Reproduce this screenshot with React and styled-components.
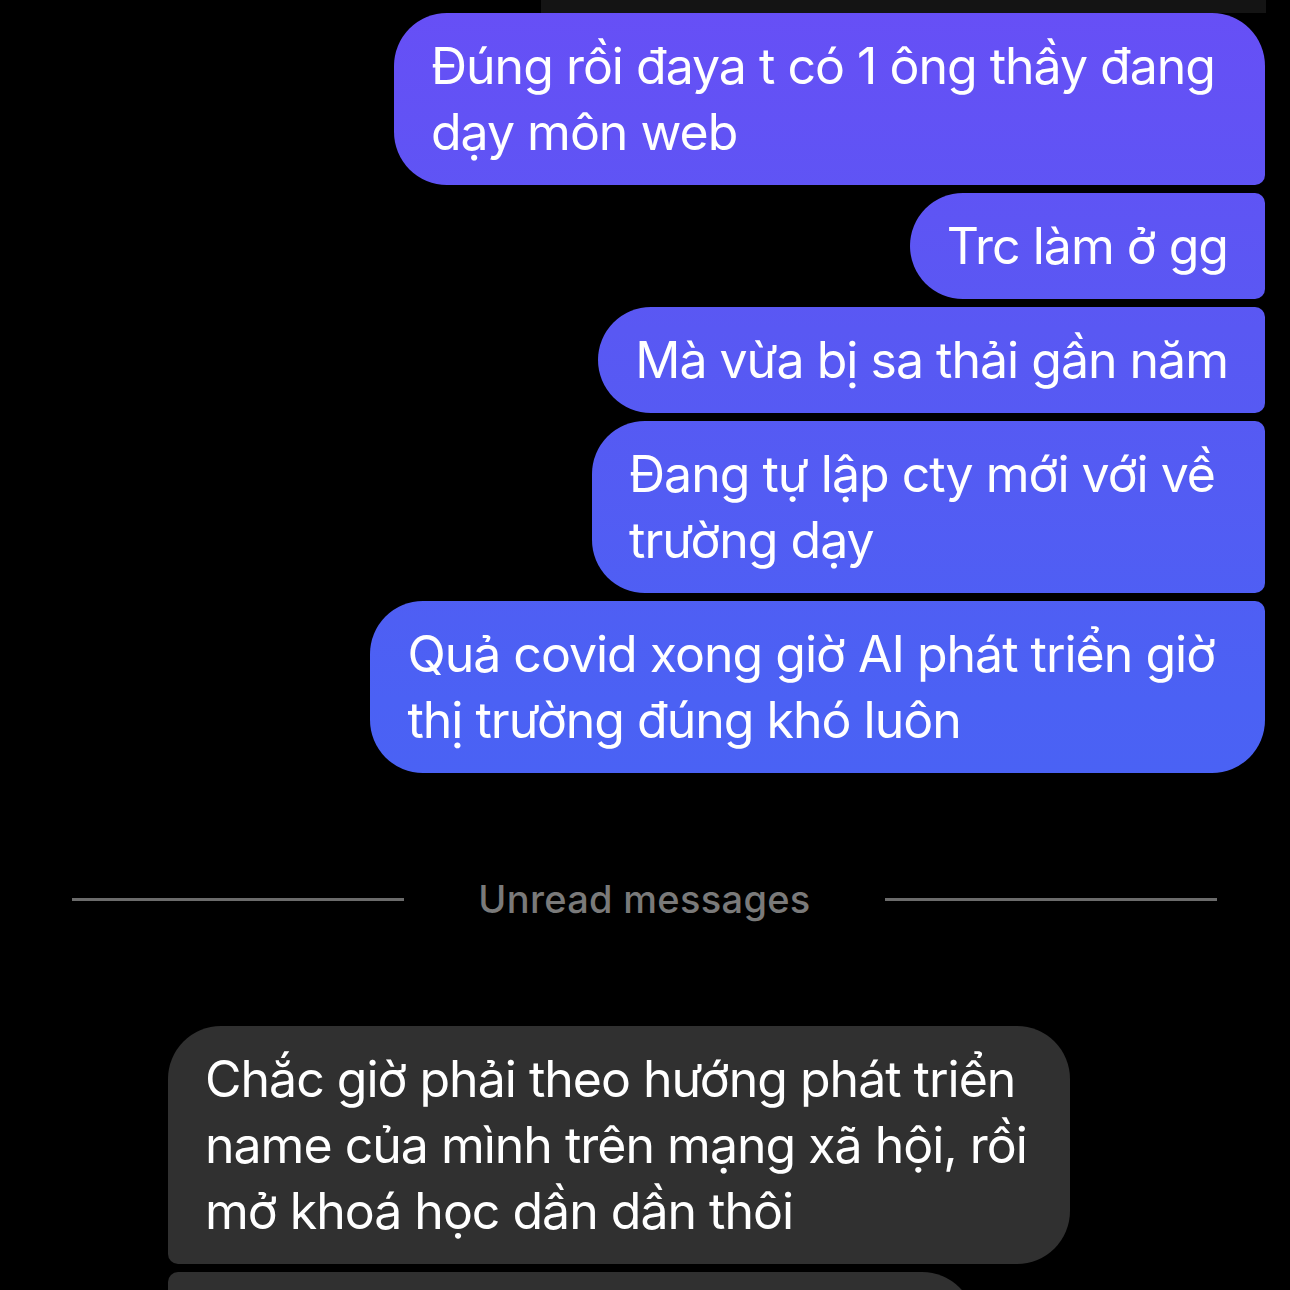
import React from "react";
import styled, { createGlobalStyle, css } from "styled-components";

const Global = createGlobalStyle`
  html, body {
    margin: 0;
    padding: 0;
    background: #000;
    overflow: hidden;
  }
  #root {
    width: 1290px;
    height: 1290px;
    overflow: hidden;
    background: #000;
  }
`;

const Screen = styled.div`
  width: 1290px;
  background: #000;
  display: flex;
  flex-direction: column;
  font-family: Inter, "Noto Sans", sans-serif;
  -webkit-font-smoothing: antialiased;
  & > * {
    flex-shrink: 0;
  }
`;

const PrevCard = styled.div`
  align-self: flex-end;
  width: 725px;
  height: 13px;
  margin-right: 24px;
  background: #141414;
`;

const Group = styled.div`
  display: flex;
  flex-direction: column;
  gap: 8px;
  align-items: ${(p) => (p.$mine ? "flex-end" : "flex-start")};
  padding: ${(p) => (p.$mine ? "0 25px 0 0" : "0 0 0 168px")};
`;

const BIG = 53;
const SMALL = 10;

const Bubble = styled.div`
  box-sizing: border-box;
  flex-shrink: 0;
  padding: 20px 37px;
  color: #fff;
  font-size: 50px;
  line-height: 66px;
  letter-spacing: -1px;
  white-space: nowrap;
  ${(p) =>
    p.$mine
      ? css`
          padding-right: ${p.$wrapped ? 50 : 37}px;
          background: linear-gradient(180deg, #674ff6 0px, #5958f3 330px, #4b61f4 700px, #4268f4 1290px);
          background-attachment: fixed;
          border-radius: ${BIG}px ${p.$pos === "first" ? BIG : SMALL}px
            ${p.$pos === "last" ? BIG : SMALL}px ${BIG}px;
        `
      : css`
          padding-right: ${p.$wrapped ? 43 : 37}px;
          background: #303030;
          border-radius: ${p.$pos === "first" ? BIG : SMALL}px ${BIG}px ${BIG}px
            ${p.$pos === "last" ? BIG : SMALL}px;
        `}
  ${(p) => p.$fixedWidth && css`width: ${p.$fixedWidth}px;`}
  ${(p) => p.$fixedHeight && css`height: ${p.$fixedHeight}px;`}
`;

const Line = styled.span`
  display: block;
`;

const Divider = styled.div`
  display: flex;
  align-items: center;
  gap: 74px;
  padding: 0 73px 0 72px;
  margin: 107px 0 108px;
`;

const Rule = styled.div`
  flex: 1;
  height: 3px;
  background: #6b6b6b;
`;

const DividerLabel = styled.span`
  font-size: 38px;
  font-weight: 500;
  line-height: 38px;
  color: #7a7a7a;
  letter-spacing: 0.3px;
`;

const mine = [
  { lines: ["Đúng rồi đaya t có 1 ông thầy đang", "dạy môn web"], pos: "first" },
  { lines: ["Trc làm ở gg"], pos: "mid" },
  { lines: ["Mà vừa bị sa thải gần năm"], pos: "mid" },
  { lines: ["Đang tự lập cty mới với về", "trường dạy"], pos: "mid" },
  { lines: ["Quả covid xong giờ AI phát triển giờ", "thị trường đúng khó luôn"], pos: "last" },
];

const theirs = [
  {
    lines: [
      "Chắc giờ phải theo hướng phát triển",
      "name của mình trên mạng xã hội, rồi",
      "mở khoá học dần dần thôi",
    ],
    pos: "first",
  },
];

export default function App() {
  return (
    <Screen>
      <Global />
      <PrevCard />
      <Group $mine>
        {mine.map((m, i) => (
          <Bubble key={i} $mine $pos={m.pos} $wrapped={m.lines.length > 1}>
            {m.lines.map((l, j) => (
              <Line key={j}>{l}</Line>
            ))}
          </Bubble>
        ))}
      </Group>
      <Divider>
        <Rule />
        <DividerLabel>Unread messages</DividerLabel>
        <Rule />
      </Divider>
      <Group>
        {theirs.map((m, i) => (
          <Bubble key={i} $pos={m.pos} $wrapped={m.lines.length > 1}>
            {m.lines.map((l, j) => (
              <Line key={j}>{l}</Line>
            ))}
          </Bubble>
        ))}
        <Bubble $pos="mid" $fixedWidth={807} $fixedHeight={106} />
      </Group>
    </Screen>
  );
}
